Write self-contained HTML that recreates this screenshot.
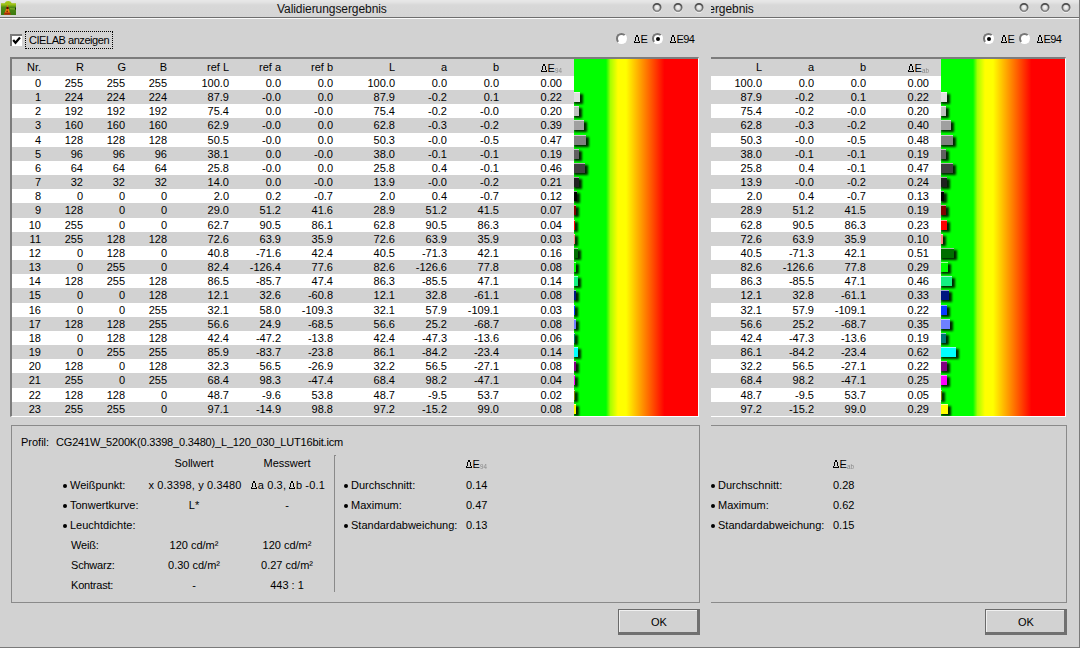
<!DOCTYPE html>
<html><head><meta charset="utf-8"><style>
*{margin:0;padding:0;box-sizing:border-box}
html,body{width:1080px;height:648px;overflow:hidden;background:#d2d2d2}
body{position:relative;font-family:"Liberation Sans",sans-serif;font-size:11px;color:#000}
.win{position:absolute;top:0;width:713px;height:648px;background:#d2d2d2;overflow:hidden}
#A{left:0}
#B{left:367px;clip-path:inset(0 0 0 344px)}
.tb{position:absolute;left:0;top:0;width:713px;height:17px;background:linear-gradient(#e8e8e8 0,#e4e4e4 2px,#d8d8d8 5px,#d5d5d5 17px)}
.tbl1{position:absolute;left:0;top:17px;width:713px;height:1px;background:#6e6e6e}
.tbl2{position:absolute;left:0;top:18px;width:713px;height:1px;background:#fafafa}
.title{position:absolute;left:277px;top:2px;letter-spacing:-0.07px;font-size:12px;line-height:14px;color:#111;white-space:nowrap}
.tbtn{position:absolute;top:3px;width:9px;height:9px;border-radius:50%;border:1.6px solid;border-color:#525252 #686868 #8c8c8c #686868;background:radial-gradient(circle at 50% 45%,#fbfbfb,#c4c4c4);box-shadow:0 1px 1px #fff}
.icon{position:absolute;left:1px;top:1px;width:15px;height:14px;background:linear-gradient(#a6c21a,#5f9320 45%,#3d7a18);border-radius:3px 3px 0 0}
.cone{position:absolute;left:3px;top:4px;width:0;height:0;border-left:3px solid transparent;border-right:3px solid transparent;border-bottom:10px solid #e36a10}
.t{position:absolute;white-space:nowrap;line-height:11px}
.t.r{text-align:right}
.t.c{transform:translateX(-50%)}
.sub{display:inline-block;font-size:8px;color:#888;vertical-align:-1px;transform:scaleX(0.78);transform-origin:0 50%}
.dl{vertical-align:baseline;margin-right:0.6px;shape-rendering:crispEdges}
.cb{position:absolute;left:10px;top:34px;width:12px;height:12px;background:#fff;border-top:2px solid #7a7a7a;border-left:2px solid #7a7a7a}
.cb svg{position:absolute;left:0px;top:0px}
.focus{position:absolute;left:25px;top:31px;width:88px;height:18px;border:1px dotted #000}
.radio{position:absolute;top:33px;width:11px;height:11px;border-radius:50%;background:#fff;border-top:2px solid #777;border-left:2px solid #777;border-right:2px solid #fff;border-bottom:2px solid #fff}
.radio i{position:absolute;left:2px;top:2px;width:4px;height:4px;border-radius:50%;background:#000}
.tframe{position:absolute;left:10px;top:57px;width:689px;height:360px;border-top:2px solid #7c7c7c;border-left:2px solid #7c7c7c;border-right:1px solid #fff;border-bottom:1px solid #fff}
.hdr{position:absolute;left:12px;top:59px;width:562px;height:17px;background:#d2d2d2}
.rw{position:absolute;left:12px;width:562px;background:#fff}
.rg{position:absolute;left:12px;width:562px;background:#d2d2d2}
.grad{position:absolute;left:574px;top:59px;width:124px;height:357px;overflow:hidden;background:linear-gradient(90deg,#00ff00 0,#00ff00 32px,#a8ff00 36.5px,#ffff00 44px,#ffff00 52px,#ff0000 90.5px,#ff0000 124px)}
.bar{position:absolute;left:0;height:10px;box-shadow:inset 0 1px 0 rgba(255,255,255,.6)}
.shd{position:absolute;left:0;height:10px;background:rgba(0,0,0,.85);filter:blur(1.1px)}
.panel{position:absolute;left:11px;top:425px;width:689px;height:178px;border:1px solid #8a8a8a}
.vsep{position:absolute;left:334px;top:455px;width:2px;height:137px;border-left:1px solid #8a8a8a;border-top:1px solid #8a8a8a}
.bul{position:absolute;width:4px;height:4px;background:#000;border-radius:50%}
.ok{position:absolute;left:618px;top:609px;width:82px;height:26px;border-top:1px solid #6a6a6a;border-left:1px solid #6a6a6a;border-right:3px solid #707070;border-bottom:3px solid #707070;box-shadow:inset 1px 1px 0 #f0f0f0}
.wbot{position:absolute;left:0;top:647px;width:713px;height:1px;background:#7a7a7a}
</style></head>
<body>
<div class="win" id="A">
<div class="tb"></div><div class="tbl1"></div><div class="tbl2"></div>
<svg style="position:absolute;left:0;top:0" width="17" height="16" viewBox="0 0 17 16"><defs><linearGradient id="ig" x1="0" y1="0" x2="0" y2="1"><stop offset="0" stop-color="#a8c814"/><stop offset="0.25" stop-color="#9cc018"/><stop offset="0.45" stop-color="#4e8a14"/><stop offset="1" stop-color="#3c7a10"/></linearGradient></defs><path d="M1 3.2 H4.6 Q5.6 1 8.2 1 Q10.8 1 11.8 3.2 H16 V15 H1 Z" fill="url(#ig)"/><path d="M7.6 4.2 L10.4 14.6 L4.2 14.6 Z" fill="#f27c12"/><rect x="4.2" y="12.6" width="6.2" height="2" fill="#a82a08"/><circle cx="7.5" cy="8" r="1.3" fill="#5a0c00"/><circle cx="7.2" cy="11.4" r="0.9" fill="#8a2a00"/><path d="M10 8.2 L15 8.6 L15 9.6 L10 9.2 Z" fill="#a0c838" opacity="0.7"/><rect x="15" y="7.6" width="1" height="2" fill="#1a2a10"/></svg>
<div class="title">Validierungsergebnis</div>
<svg style="position:absolute;left:640px;top:0" width="73" height="17" viewBox="640 0 73 17"><defs><radialGradient id="bgA" cx="0.5" cy="0.45" r="0.55"><stop offset="0" stop-color="#fbfbfb"/><stop offset="1" stop-color="#c2c2c2"/></radialGradient><linearGradient id="rgA" x1="0" y1="0" x2="0" y2="1"><stop offset="0" stop-color="#4a4a4a"/><stop offset="1" stop-color="#8a8a8a"/></linearGradient></defs>
<circle cx="657" cy="8.3" r="4.3" fill="none" stroke="#fff" stroke-opacity="0.8" stroke-width="1"/><circle cx="657" cy="7.6" r="3.7" fill="url(#bgA)" stroke="url(#rgA)" stroke-width="1.8"/>
<circle cx="678" cy="8.3" r="4.3" fill="none" stroke="#fff" stroke-opacity="0.8" stroke-width="1"/><circle cx="678" cy="7.6" r="3.7" fill="url(#bgA)" stroke="url(#rgA)" stroke-width="1.8"/>
<circle cx="699" cy="8.3" r="4.3" fill="none" stroke="#fff" stroke-opacity="0.8" stroke-width="1"/><circle cx="699" cy="7.6" r="3.7" fill="url(#bgA)" stroke="url(#rgA)" stroke-width="1.8"/>
</svg>
<div class="cb"><svg width="12" height="12" viewBox="0 0 12 12"><path d="M1.2 4 L3.5 6.8 L8 1.5" stroke="#000" stroke-width="2.2" fill="none"/></svg></div>
<div class="focus"></div><div class="t" style="left:29px;top:35px;letter-spacing:-0.45px">CIELAB anzeigen</div>
<div class="radio" style="left:616px"></div>
<div class="t" style="left:634px;top:34px;letter-spacing:-0.6px"><svg class="dl" width="6" height="8" viewBox="0 0 6 8"><path d="M2 0h2v2H2zM1 2h1v4H1zM4 2h1v4H4zM0 6h1v1H0zM5 6h1v1H5zM0 7h6v1H0z"/></svg>E</div>
<div class="radio" style="left:652px"><i></i></div>
<div class="t" style="left:670px;top:34px;letter-spacing:-0.6px"><svg class="dl" width="6" height="8" viewBox="0 0 6 8"><path d="M2 0h2v2H2zM1 2h1v4H1zM4 2h1v4H4zM0 6h1v1H0zM5 6h1v1H5zM0 7h6v1H0z"/></svg>E94</div>
<div class="tframe"></div>
<div class="hdr"></div>
<div class="t r" style="right:672px;top:62px">Nr.</div>
<div class="t r" style="right:629px;top:62px">R</div>
<div class="t r" style="right:587px;top:62px">G</div>
<div class="t r" style="right:546px;top:62px">B</div>
<div class="t r" style="right:484px;top:62px">ref L</div>
<div class="t r" style="right:432px;top:62px">ref a</div>
<div class="t r" style="right:380px;top:62px">ref b</div>
<div class="t r" style="right:318px;top:62px">L</div>
<div class="t r" style="right:266px;top:62px">a</div>
<div class="t r" style="right:214px;top:62px">b</div>
<div class="t" style="left:541px;top:63px"><svg class="dl" width="6" height="8" viewBox="0 0 6 8"><path d="M2 0h2v2H2zM1 2h1v4H1zM4 2h1v4H4zM0 6h1v1H0zM5 6h1v1H5zM0 7h6v1H0z"/></svg>E<span class="sub">94</span></div>
<div class="rw" style="top:76px;height:14px"></div>
<div class="t r" style="right:672px;top:78px">0</div>
<div class="t r" style="right:630px;top:78px">255</div>
<div class="t r" style="right:588px;top:78px">255</div>
<div class="t r" style="right:546px;top:78px">255</div>
<div class="t r" style="right:484px;top:78px">100.0</div>
<div class="t r" style="right:432px;top:78px">0.0</div>
<div class="t r" style="right:380px;top:78px">0.0</div>
<div class="t r" style="right:318px;top:78px">100.0</div>
<div class="t r" style="right:266px;top:78px">0.0</div>
<div class="t r" style="right:214px;top:78px">0.0</div>
<div class="t r" style="right:151px;top:78px">0.00</div>
<div class="rg" style="top:90px;height:14px"></div>
<div class="t r" style="right:672px;top:92px">1</div>
<div class="t r" style="right:630px;top:92px">224</div>
<div class="t r" style="right:588px;top:92px">224</div>
<div class="t r" style="right:546px;top:92px">224</div>
<div class="t r" style="right:484px;top:92px">87.9</div>
<div class="t r" style="right:432px;top:92px">-0.0</div>
<div class="t r" style="right:380px;top:92px">0.0</div>
<div class="t r" style="right:318px;top:92px">87.9</div>
<div class="t r" style="right:266px;top:92px">-0.2</div>
<div class="t r" style="right:214px;top:92px">0.1</div>
<div class="t r" style="right:151px;top:92px">0.22</div>
<div class="rw" style="top:104px;height:14px"></div>
<div class="t r" style="right:672px;top:106px">2</div>
<div class="t r" style="right:630px;top:106px">192</div>
<div class="t r" style="right:588px;top:106px">192</div>
<div class="t r" style="right:546px;top:106px">192</div>
<div class="t r" style="right:484px;top:106px">75.4</div>
<div class="t r" style="right:432px;top:106px">0.0</div>
<div class="t r" style="right:380px;top:106px">-0.0</div>
<div class="t r" style="right:318px;top:106px">75.4</div>
<div class="t r" style="right:266px;top:106px">-0.2</div>
<div class="t r" style="right:214px;top:106px">-0.0</div>
<div class="t r" style="right:151px;top:106px">0.20</div>
<div class="rg" style="top:118px;height:15px"></div>
<div class="t r" style="right:672px;top:120px">3</div>
<div class="t r" style="right:630px;top:120px">160</div>
<div class="t r" style="right:588px;top:120px">160</div>
<div class="t r" style="right:546px;top:120px">160</div>
<div class="t r" style="right:484px;top:120px">62.9</div>
<div class="t r" style="right:432px;top:120px">-0.0</div>
<div class="t r" style="right:380px;top:120px">0.0</div>
<div class="t r" style="right:318px;top:120px">62.8</div>
<div class="t r" style="right:266px;top:120px">-0.3</div>
<div class="t r" style="right:214px;top:120px">-0.2</div>
<div class="t r" style="right:151px;top:120px">0.39</div>
<div class="rw" style="top:133px;height:14px"></div>
<div class="t r" style="right:672px;top:135px">4</div>
<div class="t r" style="right:630px;top:135px">128</div>
<div class="t r" style="right:588px;top:135px">128</div>
<div class="t r" style="right:546px;top:135px">128</div>
<div class="t r" style="right:484px;top:135px">50.5</div>
<div class="t r" style="right:432px;top:135px">-0.0</div>
<div class="t r" style="right:380px;top:135px">0.0</div>
<div class="t r" style="right:318px;top:135px">50.3</div>
<div class="t r" style="right:266px;top:135px">-0.0</div>
<div class="t r" style="right:214px;top:135px">-0.5</div>
<div class="t r" style="right:151px;top:135px">0.47</div>
<div class="rg" style="top:147px;height:14px"></div>
<div class="t r" style="right:672px;top:149px">5</div>
<div class="t r" style="right:630px;top:149px">96</div>
<div class="t r" style="right:588px;top:149px">96</div>
<div class="t r" style="right:546px;top:149px">96</div>
<div class="t r" style="right:484px;top:149px">38.1</div>
<div class="t r" style="right:432px;top:149px">0.0</div>
<div class="t r" style="right:380px;top:149px">-0.0</div>
<div class="t r" style="right:318px;top:149px">38.0</div>
<div class="t r" style="right:266px;top:149px">-0.1</div>
<div class="t r" style="right:214px;top:149px">-0.1</div>
<div class="t r" style="right:151px;top:149px">0.19</div>
<div class="rw" style="top:161px;height:14px"></div>
<div class="t r" style="right:672px;top:163px">6</div>
<div class="t r" style="right:630px;top:163px">64</div>
<div class="t r" style="right:588px;top:163px">64</div>
<div class="t r" style="right:546px;top:163px">64</div>
<div class="t r" style="right:484px;top:163px">25.8</div>
<div class="t r" style="right:432px;top:163px">-0.0</div>
<div class="t r" style="right:380px;top:163px">0.0</div>
<div class="t r" style="right:318px;top:163px">25.8</div>
<div class="t r" style="right:266px;top:163px">0.4</div>
<div class="t r" style="right:214px;top:163px">-0.1</div>
<div class="t r" style="right:151px;top:163px">0.46</div>
<div class="rg" style="top:175px;height:14px"></div>
<div class="t r" style="right:672px;top:177px">7</div>
<div class="t r" style="right:630px;top:177px">32</div>
<div class="t r" style="right:588px;top:177px">32</div>
<div class="t r" style="right:546px;top:177px">32</div>
<div class="t r" style="right:484px;top:177px">14.0</div>
<div class="t r" style="right:432px;top:177px">0.0</div>
<div class="t r" style="right:380px;top:177px">-0.0</div>
<div class="t r" style="right:318px;top:177px">13.9</div>
<div class="t r" style="right:266px;top:177px">-0.0</div>
<div class="t r" style="right:214px;top:177px">-0.2</div>
<div class="t r" style="right:151px;top:177px">0.21</div>
<div class="rw" style="top:189px;height:14px"></div>
<div class="t r" style="right:672px;top:191px">8</div>
<div class="t r" style="right:630px;top:191px">0</div>
<div class="t r" style="right:588px;top:191px">0</div>
<div class="t r" style="right:546px;top:191px">0</div>
<div class="t r" style="right:484px;top:191px">2.0</div>
<div class="t r" style="right:432px;top:191px">0.2</div>
<div class="t r" style="right:380px;top:191px">-0.7</div>
<div class="t r" style="right:318px;top:191px">2.0</div>
<div class="t r" style="right:266px;top:191px">0.4</div>
<div class="t r" style="right:214px;top:191px">-0.7</div>
<div class="t r" style="right:151px;top:191px">0.12</div>
<div class="rg" style="top:203px;height:15px"></div>
<div class="t r" style="right:672px;top:205px">9</div>
<div class="t r" style="right:630px;top:205px">128</div>
<div class="t r" style="right:588px;top:205px">0</div>
<div class="t r" style="right:546px;top:205px">0</div>
<div class="t r" style="right:484px;top:205px">29.0</div>
<div class="t r" style="right:432px;top:205px">51.2</div>
<div class="t r" style="right:380px;top:205px">41.6</div>
<div class="t r" style="right:318px;top:205px">28.9</div>
<div class="t r" style="right:266px;top:205px">51.2</div>
<div class="t r" style="right:214px;top:205px">41.5</div>
<div class="t r" style="right:151px;top:205px">0.07</div>
<div class="rw" style="top:218px;height:14px"></div>
<div class="t r" style="right:672px;top:220px">10</div>
<div class="t r" style="right:630px;top:220px">255</div>
<div class="t r" style="right:588px;top:220px">0</div>
<div class="t r" style="right:546px;top:220px">0</div>
<div class="t r" style="right:484px;top:220px">62.7</div>
<div class="t r" style="right:432px;top:220px">90.5</div>
<div class="t r" style="right:380px;top:220px">86.1</div>
<div class="t r" style="right:318px;top:220px">62.8</div>
<div class="t r" style="right:266px;top:220px">90.5</div>
<div class="t r" style="right:214px;top:220px">86.3</div>
<div class="t r" style="right:151px;top:220px">0.04</div>
<div class="rg" style="top:232px;height:14px"></div>
<div class="t r" style="right:672px;top:234px">11</div>
<div class="t r" style="right:630px;top:234px">255</div>
<div class="t r" style="right:588px;top:234px">128</div>
<div class="t r" style="right:546px;top:234px">128</div>
<div class="t r" style="right:484px;top:234px">72.6</div>
<div class="t r" style="right:432px;top:234px">63.9</div>
<div class="t r" style="right:380px;top:234px">35.9</div>
<div class="t r" style="right:318px;top:234px">72.6</div>
<div class="t r" style="right:266px;top:234px">63.9</div>
<div class="t r" style="right:214px;top:234px">35.9</div>
<div class="t r" style="right:151px;top:234px">0.03</div>
<div class="rw" style="top:246px;height:14px"></div>
<div class="t r" style="right:672px;top:248px">12</div>
<div class="t r" style="right:630px;top:248px">0</div>
<div class="t r" style="right:588px;top:248px">128</div>
<div class="t r" style="right:546px;top:248px">0</div>
<div class="t r" style="right:484px;top:248px">40.8</div>
<div class="t r" style="right:432px;top:248px">-71.6</div>
<div class="t r" style="right:380px;top:248px">42.4</div>
<div class="t r" style="right:318px;top:248px">40.5</div>
<div class="t r" style="right:266px;top:248px">-71.3</div>
<div class="t r" style="right:214px;top:248px">42.1</div>
<div class="t r" style="right:151px;top:248px">0.16</div>
<div class="rg" style="top:260px;height:14px"></div>
<div class="t r" style="right:672px;top:262px">13</div>
<div class="t r" style="right:630px;top:262px">0</div>
<div class="t r" style="right:588px;top:262px">255</div>
<div class="t r" style="right:546px;top:262px">0</div>
<div class="t r" style="right:484px;top:262px">82.4</div>
<div class="t r" style="right:432px;top:262px">-126.4</div>
<div class="t r" style="right:380px;top:262px">77.6</div>
<div class="t r" style="right:318px;top:262px">82.6</div>
<div class="t r" style="right:266px;top:262px">-126.6</div>
<div class="t r" style="right:214px;top:262px">77.8</div>
<div class="t r" style="right:151px;top:262px">0.08</div>
<div class="rw" style="top:274px;height:14px"></div>
<div class="t r" style="right:672px;top:276px">14</div>
<div class="t r" style="right:630px;top:276px">128</div>
<div class="t r" style="right:588px;top:276px">255</div>
<div class="t r" style="right:546px;top:276px">128</div>
<div class="t r" style="right:484px;top:276px">86.5</div>
<div class="t r" style="right:432px;top:276px">-85.7</div>
<div class="t r" style="right:380px;top:276px">47.4</div>
<div class="t r" style="right:318px;top:276px">86.3</div>
<div class="t r" style="right:266px;top:276px">-85.5</div>
<div class="t r" style="right:214px;top:276px">47.1</div>
<div class="t r" style="right:151px;top:276px">0.14</div>
<div class="rg" style="top:288px;height:15px"></div>
<div class="t r" style="right:672px;top:290px">15</div>
<div class="t r" style="right:630px;top:290px">0</div>
<div class="t r" style="right:588px;top:290px">0</div>
<div class="t r" style="right:546px;top:290px">128</div>
<div class="t r" style="right:484px;top:290px">12.1</div>
<div class="t r" style="right:432px;top:290px">32.6</div>
<div class="t r" style="right:380px;top:290px">-60.8</div>
<div class="t r" style="right:318px;top:290px">12.1</div>
<div class="t r" style="right:266px;top:290px">32.8</div>
<div class="t r" style="right:214px;top:290px">-61.1</div>
<div class="t r" style="right:151px;top:290px">0.08</div>
<div class="rw" style="top:303px;height:14px"></div>
<div class="t r" style="right:672px;top:305px">16</div>
<div class="t r" style="right:630px;top:305px">0</div>
<div class="t r" style="right:588px;top:305px">0</div>
<div class="t r" style="right:546px;top:305px">255</div>
<div class="t r" style="right:484px;top:305px">32.1</div>
<div class="t r" style="right:432px;top:305px">58.0</div>
<div class="t r" style="right:380px;top:305px">-109.3</div>
<div class="t r" style="right:318px;top:305px">32.1</div>
<div class="t r" style="right:266px;top:305px">57.9</div>
<div class="t r" style="right:214px;top:305px">-109.1</div>
<div class="t r" style="right:151px;top:305px">0.03</div>
<div class="rg" style="top:317px;height:14px"></div>
<div class="t r" style="right:672px;top:319px">17</div>
<div class="t r" style="right:630px;top:319px">128</div>
<div class="t r" style="right:588px;top:319px">128</div>
<div class="t r" style="right:546px;top:319px">255</div>
<div class="t r" style="right:484px;top:319px">56.6</div>
<div class="t r" style="right:432px;top:319px">24.9</div>
<div class="t r" style="right:380px;top:319px">-68.5</div>
<div class="t r" style="right:318px;top:319px">56.6</div>
<div class="t r" style="right:266px;top:319px">25.2</div>
<div class="t r" style="right:214px;top:319px">-68.7</div>
<div class="t r" style="right:151px;top:319px">0.08</div>
<div class="rw" style="top:331px;height:14px"></div>
<div class="t r" style="right:672px;top:333px">18</div>
<div class="t r" style="right:630px;top:333px">0</div>
<div class="t r" style="right:588px;top:333px">128</div>
<div class="t r" style="right:546px;top:333px">128</div>
<div class="t r" style="right:484px;top:333px">42.4</div>
<div class="t r" style="right:432px;top:333px">-47.2</div>
<div class="t r" style="right:380px;top:333px">-13.8</div>
<div class="t r" style="right:318px;top:333px">42.4</div>
<div class="t r" style="right:266px;top:333px">-47.3</div>
<div class="t r" style="right:214px;top:333px">-13.6</div>
<div class="t r" style="right:151px;top:333px">0.06</div>
<div class="rg" style="top:345px;height:14px"></div>
<div class="t r" style="right:672px;top:347px">19</div>
<div class="t r" style="right:630px;top:347px">0</div>
<div class="t r" style="right:588px;top:347px">255</div>
<div class="t r" style="right:546px;top:347px">255</div>
<div class="t r" style="right:484px;top:347px">85.9</div>
<div class="t r" style="right:432px;top:347px">-83.7</div>
<div class="t r" style="right:380px;top:347px">-23.8</div>
<div class="t r" style="right:318px;top:347px">86.1</div>
<div class="t r" style="right:266px;top:347px">-84.2</div>
<div class="t r" style="right:214px;top:347px">-23.4</div>
<div class="t r" style="right:151px;top:347px">0.14</div>
<div class="rw" style="top:359px;height:14px"></div>
<div class="t r" style="right:672px;top:361px">20</div>
<div class="t r" style="right:630px;top:361px">128</div>
<div class="t r" style="right:588px;top:361px">0</div>
<div class="t r" style="right:546px;top:361px">128</div>
<div class="t r" style="right:484px;top:361px">32.3</div>
<div class="t r" style="right:432px;top:361px">56.5</div>
<div class="t r" style="right:380px;top:361px">-26.9</div>
<div class="t r" style="right:318px;top:361px">32.2</div>
<div class="t r" style="right:266px;top:361px">56.5</div>
<div class="t r" style="right:214px;top:361px">-27.1</div>
<div class="t r" style="right:151px;top:361px">0.08</div>
<div class="rg" style="top:373px;height:15px"></div>
<div class="t r" style="right:672px;top:375px">21</div>
<div class="t r" style="right:630px;top:375px">255</div>
<div class="t r" style="right:588px;top:375px">0</div>
<div class="t r" style="right:546px;top:375px">255</div>
<div class="t r" style="right:484px;top:375px">68.4</div>
<div class="t r" style="right:432px;top:375px">98.3</div>
<div class="t r" style="right:380px;top:375px">-47.4</div>
<div class="t r" style="right:318px;top:375px">68.4</div>
<div class="t r" style="right:266px;top:375px">98.2</div>
<div class="t r" style="right:214px;top:375px">-47.1</div>
<div class="t r" style="right:151px;top:375px">0.04</div>
<div class="rw" style="top:388px;height:14px"></div>
<div class="t r" style="right:672px;top:390px">22</div>
<div class="t r" style="right:630px;top:390px">128</div>
<div class="t r" style="right:588px;top:390px">128</div>
<div class="t r" style="right:546px;top:390px">0</div>
<div class="t r" style="right:484px;top:390px">48.7</div>
<div class="t r" style="right:432px;top:390px">-9.6</div>
<div class="t r" style="right:380px;top:390px">53.8</div>
<div class="t r" style="right:318px;top:390px">48.7</div>
<div class="t r" style="right:266px;top:390px">-9.5</div>
<div class="t r" style="right:214px;top:390px">53.7</div>
<div class="t r" style="right:151px;top:390px">0.02</div>
<div class="rg" style="top:402px;height:14px"></div>
<div class="t r" style="right:672px;top:404px">23</div>
<div class="t r" style="right:630px;top:404px">255</div>
<div class="t r" style="right:588px;top:404px">255</div>
<div class="t r" style="right:546px;top:404px">0</div>
<div class="t r" style="right:484px;top:404px">97.1</div>
<div class="t r" style="right:432px;top:404px">-14.9</div>
<div class="t r" style="right:380px;top:404px">98.8</div>
<div class="t r" style="right:318px;top:404px">97.2</div>
<div class="t r" style="right:266px;top:404px">-15.2</div>
<div class="t r" style="right:214px;top:404px">99.0</div>
<div class="t r" style="right:151px;top:404px">0.08</div>
<div class="grad">
<div class="shd" style="top:35px;width:9px"></div>
<div class="bar" style="top:33px;width:6px;background:rgb(224, 224, 224)"></div>
<div class="shd" style="top:49px;width:8px"></div>
<div class="bar" style="top:47px;width:5px;background:rgb(192, 192, 192)"></div>
<div class="shd" style="top:63px;width:13px"></div>
<div class="bar" style="top:61px;width:10px;background:rgb(160, 160, 160)"></div>
<div class="shd" style="top:78px;width:15px"></div>
<div class="bar" style="top:76px;width:12px;background:rgb(128, 128, 128)"></div>
<div class="shd" style="top:92px;width:8px"></div>
<div class="bar" style="top:90px;width:5px;background:rgb(96, 96, 96)"></div>
<div class="shd" style="top:106px;width:14px"></div>
<div class="bar" style="top:104px;width:11px;background:rgb(64, 64, 64)"></div>
<div class="shd" style="top:120px;width:8px"></div>
<div class="bar" style="top:118px;width:5px;background:rgb(32, 32, 32)"></div>
<div class="shd" style="top:134px;width:6px"></div>
<div class="bar" style="top:132px;width:3px;background:rgb(0, 0, 0)"></div>
<div class="shd" style="top:148px;width:5px"></div>
<div class="bar" style="top:146px;width:2px;background:rgb(128, 0, 0)"></div>
<div class="shd" style="top:163px;width:4px"></div>
<div class="bar" style="top:161px;width:1px;background:rgb(255, 0, 0)"></div>
<div class="shd" style="top:177px;width:4px"></div>
<div class="bar" style="top:175px;width:1px;background:rgb(255, 128, 128)"></div>
<div class="shd" style="top:191px;width:7px"></div>
<div class="bar" style="top:189px;width:4px;background:rgb(0, 110, 0)"></div>
<div class="shd" style="top:205px;width:5px"></div>
<div class="bar" style="top:203px;width:2px;background:rgb(0, 255, 0)"></div>
<div class="shd" style="top:219px;width:7px"></div>
<div class="bar" style="top:217px;width:4px;background:rgb(20, 240, 130)"></div>
<div class="shd" style="top:233px;width:5px"></div>
<div class="bar" style="top:231px;width:2px;background:rgb(0, 24, 128)"></div>
<div class="shd" style="top:248px;width:4px"></div>
<div class="bar" style="top:246px;width:1px;background:rgb(10, 60, 255)"></div>
<div class="shd" style="top:262px;width:5px"></div>
<div class="bar" style="top:260px;width:2px;background:rgb(110, 128, 255)"></div>
<div class="shd" style="top:276px;width:4px"></div>
<div class="bar" style="top:274px;width:1px;background:rgb(0, 118, 118)"></div>
<div class="shd" style="top:290px;width:7px"></div>
<div class="bar" style="top:288px;width:4px;background:rgb(0, 255, 255)"></div>
<div class="shd" style="top:304px;width:5px"></div>
<div class="bar" style="top:302px;width:2px;background:rgb(128, 0, 128)"></div>
<div class="shd" style="top:318px;width:4px"></div>
<div class="bar" style="top:316px;width:1px;background:rgb(255, 0, 255)"></div>
<div class="shd" style="top:333px;width:4px"></div>
<div class="bar" style="top:331px;width:1px;background:rgb(128, 128, 0)"></div>
<div class="shd" style="top:347px;width:5px"></div>
<div class="bar" style="top:345px;width:2px;background:rgb(255, 255, 0)"></div>
</div>
<div class="panel"></div>
<div class="t" style="left:21px;top:437px">Profil:</div>
<div class="t" style="left:56px;top:437px;letter-spacing:-0.18px">CG241W_5200K(0.3398_0.3480)_L_120_030_LUT16bit.icm</div>
<div class="t c" style="left:194px;top:458px">Sollwert</div>
<div class="t c" style="left:287px;top:458px">Messwert</div>
<div class="bul" style="left:63px;top:484px"></div>
<div class="t" style="left:70px;top:480px">Wei&szlig;punkt:</div>
<div class="bul" style="left:63px;top:504px"></div>
<div class="t" style="left:70px;top:500px">Tonwertkurve:</div>
<div class="bul" style="left:63px;top:524px"></div>
<div class="t" style="left:70px;top:520px">Leuchtdichte:</div>
<div class="t c" style="left:195px;top:480px;letter-spacing:0.15px">x 0.3398, y 0.3480</div>
<div class="t c" style="left:288px;top:480px;letter-spacing:0.15px"><svg class="dl" width="6" height="8" viewBox="0 0 6 8"><path d="M2 0h2v2H2zM1 2h1v4H1zM4 2h1v4H4zM0 6h1v1H0zM5 6h1v1H5zM0 7h6v1H0z"/></svg>a 0.3, <svg class="dl" width="6" height="8" viewBox="0 0 6 8"><path d="M2 0h2v2H2zM1 2h1v4H1zM4 2h1v4H4zM0 6h1v1H0zM5 6h1v1H5zM0 7h6v1H0z"/></svg>b -0.1</div>
<div class="t c" style="left:194px;top:500px">L*</div>
<div class="t c" style="left:287px;top:500px">-</div>
<div class="t" style="left:71px;top:540px;letter-spacing:-0.2px">Wei&szlig;:</div>
<div class="t c" style="left:194px;top:540px">120 cd/m&sup2;</div>
<div class="t c" style="left:287px;top:540px">120 cd/m&sup2;</div>
<div class="t" style="left:71px;top:560px;letter-spacing:-0.2px">Schwarz:</div>
<div class="t c" style="left:194px;top:560px">0.30 cd/m&sup2;</div>
<div class="t c" style="left:287px;top:560px">0.27 cd/m&sup2;</div>
<div class="t" style="left:71px;top:580px;letter-spacing:-0.2px">Kontrast:</div>
<div class="t c" style="left:194px;top:580px">-</div>
<div class="t c" style="left:287px;top:580px">443 : 1</div>
<div class="vsep"></div>
<div class="t" style="left:466px;top:459px"><svg class="dl" width="6" height="8" viewBox="0 0 6 8"><path d="M2 0h2v2H2zM1 2h1v4H1zM4 2h1v4H4zM0 6h1v1H0zM5 6h1v1H5zM0 7h6v1H0z"/></svg>E<span class="sub">94</span></div>
<div class="bul" style="left:344px;top:484px"></div>
<div class="t" style="left:351px;top:480px">Durchschnitt:</div>
<div class="t" style="left:466px;top:480px">0.14</div>
<div class="bul" style="left:344px;top:504px"></div>
<div class="t" style="left:351px;top:500px">Maximum:</div>
<div class="t" style="left:466px;top:500px">0.47</div>
<div class="bul" style="left:344px;top:524px"></div>
<div class="t" style="left:351px;top:520px">Standardabweichung:</div>
<div class="t" style="left:466px;top:520px">0.13</div>
<div class="ok"><div class="t c" style="left:40px;top:7px">OK</div></div>
<div class="wbot"></div>
</div>
<div class="win" id="B">
<div class="tb"></div><div class="tbl1"></div><div class="tbl2"></div>
<div class="title">Validierungsergebnis</div>
<svg style="position:absolute;left:640px;top:0" width="73" height="17" viewBox="640 0 73 17"><defs><radialGradient id="bgB" cx="0.5" cy="0.45" r="0.55"><stop offset="0" stop-color="#fbfbfb"/><stop offset="1" stop-color="#c2c2c2"/></radialGradient><linearGradient id="rgB" x1="0" y1="0" x2="0" y2="1"><stop offset="0" stop-color="#4a4a4a"/><stop offset="1" stop-color="#8a8a8a"/></linearGradient></defs>
<circle cx="657" cy="8.3" r="4.3" fill="none" stroke="#fff" stroke-opacity="0.8" stroke-width="1"/><circle cx="657" cy="7.6" r="3.7" fill="url(#bgB)" stroke="url(#rgB)" stroke-width="1.8"/>
<circle cx="678" cy="8.3" r="4.3" fill="none" stroke="#fff" stroke-opacity="0.8" stroke-width="1"/><circle cx="678" cy="7.6" r="3.7" fill="url(#bgB)" stroke="url(#rgB)" stroke-width="1.8"/>
<circle cx="699" cy="8.3" r="4.3" fill="none" stroke="#fff" stroke-opacity="0.8" stroke-width="1"/><circle cx="699" cy="7.6" r="3.7" fill="url(#bgB)" stroke="url(#rgB)" stroke-width="1.8"/>
</svg>
<div class="cb"><svg width="12" height="12" viewBox="0 0 12 12"><path d="M1.2 4 L3.5 6.8 L8 1.5" stroke="#000" stroke-width="2.2" fill="none"/></svg></div>
<div class="focus"></div><div class="t" style="left:29px;top:35px;letter-spacing:-0.45px">CIELAB anzeigen</div>
<div class="radio" style="left:616px"><i></i></div>
<div class="t" style="left:634px;top:34px;letter-spacing:-0.6px"><svg class="dl" width="6" height="8" viewBox="0 0 6 8"><path d="M2 0h2v2H2zM1 2h1v4H1zM4 2h1v4H4zM0 6h1v1H0zM5 6h1v1H5zM0 7h6v1H0z"/></svg>E</div>
<div class="radio" style="left:652px"></div>
<div class="t" style="left:670px;top:34px;letter-spacing:-0.6px"><svg class="dl" width="6" height="8" viewBox="0 0 6 8"><path d="M2 0h2v2H2zM1 2h1v4H1zM4 2h1v4H4zM0 6h1v1H0zM5 6h1v1H5zM0 7h6v1H0z"/></svg>E94</div>
<div class="tframe"></div>
<div class="hdr"></div>
<div class="t r" style="right:672px;top:62px">Nr.</div>
<div class="t r" style="right:629px;top:62px">R</div>
<div class="t r" style="right:587px;top:62px">G</div>
<div class="t r" style="right:546px;top:62px">B</div>
<div class="t r" style="right:484px;top:62px">ref L</div>
<div class="t r" style="right:432px;top:62px">ref a</div>
<div class="t r" style="right:380px;top:62px">ref b</div>
<div class="t r" style="right:318px;top:62px">L</div>
<div class="t r" style="right:266px;top:62px">a</div>
<div class="t r" style="right:214px;top:62px">b</div>
<div class="t" style="left:541px;top:63px"><svg class="dl" width="6" height="8" viewBox="0 0 6 8"><path d="M2 0h2v2H2zM1 2h1v4H1zM4 2h1v4H4zM0 6h1v1H0zM5 6h1v1H5zM0 7h6v1H0z"/></svg>E<span class="sub">ab</span></div>
<div class="rw" style="top:76px;height:14px"></div>
<div class="t r" style="right:672px;top:78px">0</div>
<div class="t r" style="right:630px;top:78px">255</div>
<div class="t r" style="right:588px;top:78px">255</div>
<div class="t r" style="right:546px;top:78px">255</div>
<div class="t r" style="right:484px;top:78px">100.0</div>
<div class="t r" style="right:432px;top:78px">0.0</div>
<div class="t r" style="right:380px;top:78px">0.0</div>
<div class="t r" style="right:318px;top:78px">100.0</div>
<div class="t r" style="right:266px;top:78px">0.0</div>
<div class="t r" style="right:214px;top:78px">0.0</div>
<div class="t r" style="right:151px;top:78px">0.00</div>
<div class="rg" style="top:90px;height:14px"></div>
<div class="t r" style="right:672px;top:92px">1</div>
<div class="t r" style="right:630px;top:92px">224</div>
<div class="t r" style="right:588px;top:92px">224</div>
<div class="t r" style="right:546px;top:92px">224</div>
<div class="t r" style="right:484px;top:92px">87.9</div>
<div class="t r" style="right:432px;top:92px">-0.0</div>
<div class="t r" style="right:380px;top:92px">0.0</div>
<div class="t r" style="right:318px;top:92px">87.9</div>
<div class="t r" style="right:266px;top:92px">-0.2</div>
<div class="t r" style="right:214px;top:92px">0.1</div>
<div class="t r" style="right:151px;top:92px">0.22</div>
<div class="rw" style="top:104px;height:14px"></div>
<div class="t r" style="right:672px;top:106px">2</div>
<div class="t r" style="right:630px;top:106px">192</div>
<div class="t r" style="right:588px;top:106px">192</div>
<div class="t r" style="right:546px;top:106px">192</div>
<div class="t r" style="right:484px;top:106px">75.4</div>
<div class="t r" style="right:432px;top:106px">0.0</div>
<div class="t r" style="right:380px;top:106px">-0.0</div>
<div class="t r" style="right:318px;top:106px">75.4</div>
<div class="t r" style="right:266px;top:106px">-0.2</div>
<div class="t r" style="right:214px;top:106px">-0.0</div>
<div class="t r" style="right:151px;top:106px">0.20</div>
<div class="rg" style="top:118px;height:15px"></div>
<div class="t r" style="right:672px;top:120px">3</div>
<div class="t r" style="right:630px;top:120px">160</div>
<div class="t r" style="right:588px;top:120px">160</div>
<div class="t r" style="right:546px;top:120px">160</div>
<div class="t r" style="right:484px;top:120px">62.9</div>
<div class="t r" style="right:432px;top:120px">-0.0</div>
<div class="t r" style="right:380px;top:120px">0.0</div>
<div class="t r" style="right:318px;top:120px">62.8</div>
<div class="t r" style="right:266px;top:120px">-0.3</div>
<div class="t r" style="right:214px;top:120px">-0.2</div>
<div class="t r" style="right:151px;top:120px">0.40</div>
<div class="rw" style="top:133px;height:14px"></div>
<div class="t r" style="right:672px;top:135px">4</div>
<div class="t r" style="right:630px;top:135px">128</div>
<div class="t r" style="right:588px;top:135px">128</div>
<div class="t r" style="right:546px;top:135px">128</div>
<div class="t r" style="right:484px;top:135px">50.5</div>
<div class="t r" style="right:432px;top:135px">-0.0</div>
<div class="t r" style="right:380px;top:135px">0.0</div>
<div class="t r" style="right:318px;top:135px">50.3</div>
<div class="t r" style="right:266px;top:135px">-0.0</div>
<div class="t r" style="right:214px;top:135px">-0.5</div>
<div class="t r" style="right:151px;top:135px">0.48</div>
<div class="rg" style="top:147px;height:14px"></div>
<div class="t r" style="right:672px;top:149px">5</div>
<div class="t r" style="right:630px;top:149px">96</div>
<div class="t r" style="right:588px;top:149px">96</div>
<div class="t r" style="right:546px;top:149px">96</div>
<div class="t r" style="right:484px;top:149px">38.1</div>
<div class="t r" style="right:432px;top:149px">0.0</div>
<div class="t r" style="right:380px;top:149px">-0.0</div>
<div class="t r" style="right:318px;top:149px">38.0</div>
<div class="t r" style="right:266px;top:149px">-0.1</div>
<div class="t r" style="right:214px;top:149px">-0.1</div>
<div class="t r" style="right:151px;top:149px">0.19</div>
<div class="rw" style="top:161px;height:14px"></div>
<div class="t r" style="right:672px;top:163px">6</div>
<div class="t r" style="right:630px;top:163px">64</div>
<div class="t r" style="right:588px;top:163px">64</div>
<div class="t r" style="right:546px;top:163px">64</div>
<div class="t r" style="right:484px;top:163px">25.8</div>
<div class="t r" style="right:432px;top:163px">-0.0</div>
<div class="t r" style="right:380px;top:163px">0.0</div>
<div class="t r" style="right:318px;top:163px">25.8</div>
<div class="t r" style="right:266px;top:163px">0.4</div>
<div class="t r" style="right:214px;top:163px">-0.1</div>
<div class="t r" style="right:151px;top:163px">0.47</div>
<div class="rg" style="top:175px;height:14px"></div>
<div class="t r" style="right:672px;top:177px">7</div>
<div class="t r" style="right:630px;top:177px">32</div>
<div class="t r" style="right:588px;top:177px">32</div>
<div class="t r" style="right:546px;top:177px">32</div>
<div class="t r" style="right:484px;top:177px">14.0</div>
<div class="t r" style="right:432px;top:177px">0.0</div>
<div class="t r" style="right:380px;top:177px">-0.0</div>
<div class="t r" style="right:318px;top:177px">13.9</div>
<div class="t r" style="right:266px;top:177px">-0.0</div>
<div class="t r" style="right:214px;top:177px">-0.2</div>
<div class="t r" style="right:151px;top:177px">0.24</div>
<div class="rw" style="top:189px;height:14px"></div>
<div class="t r" style="right:672px;top:191px">8</div>
<div class="t r" style="right:630px;top:191px">0</div>
<div class="t r" style="right:588px;top:191px">0</div>
<div class="t r" style="right:546px;top:191px">0</div>
<div class="t r" style="right:484px;top:191px">2.0</div>
<div class="t r" style="right:432px;top:191px">0.2</div>
<div class="t r" style="right:380px;top:191px">-0.7</div>
<div class="t r" style="right:318px;top:191px">2.0</div>
<div class="t r" style="right:266px;top:191px">0.4</div>
<div class="t r" style="right:214px;top:191px">-0.7</div>
<div class="t r" style="right:151px;top:191px">0.13</div>
<div class="rg" style="top:203px;height:15px"></div>
<div class="t r" style="right:672px;top:205px">9</div>
<div class="t r" style="right:630px;top:205px">128</div>
<div class="t r" style="right:588px;top:205px">0</div>
<div class="t r" style="right:546px;top:205px">0</div>
<div class="t r" style="right:484px;top:205px">29.0</div>
<div class="t r" style="right:432px;top:205px">51.2</div>
<div class="t r" style="right:380px;top:205px">41.6</div>
<div class="t r" style="right:318px;top:205px">28.9</div>
<div class="t r" style="right:266px;top:205px">51.2</div>
<div class="t r" style="right:214px;top:205px">41.5</div>
<div class="t r" style="right:151px;top:205px">0.19</div>
<div class="rw" style="top:218px;height:14px"></div>
<div class="t r" style="right:672px;top:220px">10</div>
<div class="t r" style="right:630px;top:220px">255</div>
<div class="t r" style="right:588px;top:220px">0</div>
<div class="t r" style="right:546px;top:220px">0</div>
<div class="t r" style="right:484px;top:220px">62.7</div>
<div class="t r" style="right:432px;top:220px">90.5</div>
<div class="t r" style="right:380px;top:220px">86.1</div>
<div class="t r" style="right:318px;top:220px">62.8</div>
<div class="t r" style="right:266px;top:220px">90.5</div>
<div class="t r" style="right:214px;top:220px">86.3</div>
<div class="t r" style="right:151px;top:220px">0.23</div>
<div class="rg" style="top:232px;height:14px"></div>
<div class="t r" style="right:672px;top:234px">11</div>
<div class="t r" style="right:630px;top:234px">255</div>
<div class="t r" style="right:588px;top:234px">128</div>
<div class="t r" style="right:546px;top:234px">128</div>
<div class="t r" style="right:484px;top:234px">72.6</div>
<div class="t r" style="right:432px;top:234px">63.9</div>
<div class="t r" style="right:380px;top:234px">35.9</div>
<div class="t r" style="right:318px;top:234px">72.6</div>
<div class="t r" style="right:266px;top:234px">63.9</div>
<div class="t r" style="right:214px;top:234px">35.9</div>
<div class="t r" style="right:151px;top:234px">0.10</div>
<div class="rw" style="top:246px;height:14px"></div>
<div class="t r" style="right:672px;top:248px">12</div>
<div class="t r" style="right:630px;top:248px">0</div>
<div class="t r" style="right:588px;top:248px">128</div>
<div class="t r" style="right:546px;top:248px">0</div>
<div class="t r" style="right:484px;top:248px">40.8</div>
<div class="t r" style="right:432px;top:248px">-71.6</div>
<div class="t r" style="right:380px;top:248px">42.4</div>
<div class="t r" style="right:318px;top:248px">40.5</div>
<div class="t r" style="right:266px;top:248px">-71.3</div>
<div class="t r" style="right:214px;top:248px">42.1</div>
<div class="t r" style="right:151px;top:248px">0.51</div>
<div class="rg" style="top:260px;height:14px"></div>
<div class="t r" style="right:672px;top:262px">13</div>
<div class="t r" style="right:630px;top:262px">0</div>
<div class="t r" style="right:588px;top:262px">255</div>
<div class="t r" style="right:546px;top:262px">0</div>
<div class="t r" style="right:484px;top:262px">82.4</div>
<div class="t r" style="right:432px;top:262px">-126.4</div>
<div class="t r" style="right:380px;top:262px">77.6</div>
<div class="t r" style="right:318px;top:262px">82.6</div>
<div class="t r" style="right:266px;top:262px">-126.6</div>
<div class="t r" style="right:214px;top:262px">77.8</div>
<div class="t r" style="right:151px;top:262px">0.29</div>
<div class="rw" style="top:274px;height:14px"></div>
<div class="t r" style="right:672px;top:276px">14</div>
<div class="t r" style="right:630px;top:276px">128</div>
<div class="t r" style="right:588px;top:276px">255</div>
<div class="t r" style="right:546px;top:276px">128</div>
<div class="t r" style="right:484px;top:276px">86.5</div>
<div class="t r" style="right:432px;top:276px">-85.7</div>
<div class="t r" style="right:380px;top:276px">47.4</div>
<div class="t r" style="right:318px;top:276px">86.3</div>
<div class="t r" style="right:266px;top:276px">-85.5</div>
<div class="t r" style="right:214px;top:276px">47.1</div>
<div class="t r" style="right:151px;top:276px">0.46</div>
<div class="rg" style="top:288px;height:15px"></div>
<div class="t r" style="right:672px;top:290px">15</div>
<div class="t r" style="right:630px;top:290px">0</div>
<div class="t r" style="right:588px;top:290px">0</div>
<div class="t r" style="right:546px;top:290px">128</div>
<div class="t r" style="right:484px;top:290px">12.1</div>
<div class="t r" style="right:432px;top:290px">32.6</div>
<div class="t r" style="right:380px;top:290px">-60.8</div>
<div class="t r" style="right:318px;top:290px">12.1</div>
<div class="t r" style="right:266px;top:290px">32.8</div>
<div class="t r" style="right:214px;top:290px">-61.1</div>
<div class="t r" style="right:151px;top:290px">0.33</div>
<div class="rw" style="top:303px;height:14px"></div>
<div class="t r" style="right:672px;top:305px">16</div>
<div class="t r" style="right:630px;top:305px">0</div>
<div class="t r" style="right:588px;top:305px">0</div>
<div class="t r" style="right:546px;top:305px">255</div>
<div class="t r" style="right:484px;top:305px">32.1</div>
<div class="t r" style="right:432px;top:305px">58.0</div>
<div class="t r" style="right:380px;top:305px">-109.3</div>
<div class="t r" style="right:318px;top:305px">32.1</div>
<div class="t r" style="right:266px;top:305px">57.9</div>
<div class="t r" style="right:214px;top:305px">-109.1</div>
<div class="t r" style="right:151px;top:305px">0.22</div>
<div class="rg" style="top:317px;height:14px"></div>
<div class="t r" style="right:672px;top:319px">17</div>
<div class="t r" style="right:630px;top:319px">128</div>
<div class="t r" style="right:588px;top:319px">128</div>
<div class="t r" style="right:546px;top:319px">255</div>
<div class="t r" style="right:484px;top:319px">56.6</div>
<div class="t r" style="right:432px;top:319px">24.9</div>
<div class="t r" style="right:380px;top:319px">-68.5</div>
<div class="t r" style="right:318px;top:319px">56.6</div>
<div class="t r" style="right:266px;top:319px">25.2</div>
<div class="t r" style="right:214px;top:319px">-68.7</div>
<div class="t r" style="right:151px;top:319px">0.35</div>
<div class="rw" style="top:331px;height:14px"></div>
<div class="t r" style="right:672px;top:333px">18</div>
<div class="t r" style="right:630px;top:333px">0</div>
<div class="t r" style="right:588px;top:333px">128</div>
<div class="t r" style="right:546px;top:333px">128</div>
<div class="t r" style="right:484px;top:333px">42.4</div>
<div class="t r" style="right:432px;top:333px">-47.2</div>
<div class="t r" style="right:380px;top:333px">-13.8</div>
<div class="t r" style="right:318px;top:333px">42.4</div>
<div class="t r" style="right:266px;top:333px">-47.3</div>
<div class="t r" style="right:214px;top:333px">-13.6</div>
<div class="t r" style="right:151px;top:333px">0.19</div>
<div class="rg" style="top:345px;height:14px"></div>
<div class="t r" style="right:672px;top:347px">19</div>
<div class="t r" style="right:630px;top:347px">0</div>
<div class="t r" style="right:588px;top:347px">255</div>
<div class="t r" style="right:546px;top:347px">255</div>
<div class="t r" style="right:484px;top:347px">85.9</div>
<div class="t r" style="right:432px;top:347px">-83.7</div>
<div class="t r" style="right:380px;top:347px">-23.8</div>
<div class="t r" style="right:318px;top:347px">86.1</div>
<div class="t r" style="right:266px;top:347px">-84.2</div>
<div class="t r" style="right:214px;top:347px">-23.4</div>
<div class="t r" style="right:151px;top:347px">0.62</div>
<div class="rw" style="top:359px;height:14px"></div>
<div class="t r" style="right:672px;top:361px">20</div>
<div class="t r" style="right:630px;top:361px">128</div>
<div class="t r" style="right:588px;top:361px">0</div>
<div class="t r" style="right:546px;top:361px">128</div>
<div class="t r" style="right:484px;top:361px">32.3</div>
<div class="t r" style="right:432px;top:361px">56.5</div>
<div class="t r" style="right:380px;top:361px">-26.9</div>
<div class="t r" style="right:318px;top:361px">32.2</div>
<div class="t r" style="right:266px;top:361px">56.5</div>
<div class="t r" style="right:214px;top:361px">-27.1</div>
<div class="t r" style="right:151px;top:361px">0.22</div>
<div class="rg" style="top:373px;height:15px"></div>
<div class="t r" style="right:672px;top:375px">21</div>
<div class="t r" style="right:630px;top:375px">255</div>
<div class="t r" style="right:588px;top:375px">0</div>
<div class="t r" style="right:546px;top:375px">255</div>
<div class="t r" style="right:484px;top:375px">68.4</div>
<div class="t r" style="right:432px;top:375px">98.3</div>
<div class="t r" style="right:380px;top:375px">-47.4</div>
<div class="t r" style="right:318px;top:375px">68.4</div>
<div class="t r" style="right:266px;top:375px">98.2</div>
<div class="t r" style="right:214px;top:375px">-47.1</div>
<div class="t r" style="right:151px;top:375px">0.25</div>
<div class="rw" style="top:388px;height:14px"></div>
<div class="t r" style="right:672px;top:390px">22</div>
<div class="t r" style="right:630px;top:390px">128</div>
<div class="t r" style="right:588px;top:390px">128</div>
<div class="t r" style="right:546px;top:390px">0</div>
<div class="t r" style="right:484px;top:390px">48.7</div>
<div class="t r" style="right:432px;top:390px">-9.6</div>
<div class="t r" style="right:380px;top:390px">53.8</div>
<div class="t r" style="right:318px;top:390px">48.7</div>
<div class="t r" style="right:266px;top:390px">-9.5</div>
<div class="t r" style="right:214px;top:390px">53.7</div>
<div class="t r" style="right:151px;top:390px">0.05</div>
<div class="rg" style="top:402px;height:14px"></div>
<div class="t r" style="right:672px;top:404px">23</div>
<div class="t r" style="right:630px;top:404px">255</div>
<div class="t r" style="right:588px;top:404px">255</div>
<div class="t r" style="right:546px;top:404px">0</div>
<div class="t r" style="right:484px;top:404px">97.1</div>
<div class="t r" style="right:432px;top:404px">-14.9</div>
<div class="t r" style="right:380px;top:404px">98.8</div>
<div class="t r" style="right:318px;top:404px">97.2</div>
<div class="t r" style="right:266px;top:404px">-15.2</div>
<div class="t r" style="right:214px;top:404px">99.0</div>
<div class="t r" style="right:151px;top:404px">0.29</div>
<div class="grad">
<div class="shd" style="top:35px;width:9px"></div>
<div class="bar" style="top:33px;width:6px;background:rgb(224, 224, 224)"></div>
<div class="shd" style="top:49px;width:8px"></div>
<div class="bar" style="top:47px;width:5px;background:rgb(192, 192, 192)"></div>
<div class="shd" style="top:63px;width:13px"></div>
<div class="bar" style="top:61px;width:10px;background:rgb(160, 160, 160)"></div>
<div class="shd" style="top:78px;width:15px"></div>
<div class="bar" style="top:76px;width:12px;background:rgb(128, 128, 128)"></div>
<div class="shd" style="top:92px;width:8px"></div>
<div class="bar" style="top:90px;width:5px;background:rgb(96, 96, 96)"></div>
<div class="shd" style="top:106px;width:15px"></div>
<div class="bar" style="top:104px;width:12px;background:rgb(64, 64, 64)"></div>
<div class="shd" style="top:120px;width:9px"></div>
<div class="bar" style="top:118px;width:6px;background:rgb(32, 32, 32)"></div>
<div class="shd" style="top:134px;width:6px"></div>
<div class="bar" style="top:132px;width:3px;background:rgb(0, 0, 0)"></div>
<div class="shd" style="top:148px;width:8px"></div>
<div class="bar" style="top:146px;width:5px;background:rgb(128, 0, 0)"></div>
<div class="shd" style="top:163px;width:9px"></div>
<div class="bar" style="top:161px;width:6px;background:rgb(255, 0, 0)"></div>
<div class="shd" style="top:177px;width:5px"></div>
<div class="bar" style="top:175px;width:2px;background:rgb(255, 128, 128)"></div>
<div class="shd" style="top:191px;width:16px"></div>
<div class="bar" style="top:189px;width:13px;background:rgb(0, 110, 0)"></div>
<div class="shd" style="top:205px;width:10px"></div>
<div class="bar" style="top:203px;width:7px;background:rgb(0, 255, 0)"></div>
<div class="shd" style="top:219px;width:14px"></div>
<div class="bar" style="top:217px;width:11px;background:rgb(20, 240, 130)"></div>
<div class="shd" style="top:233px;width:11px"></div>
<div class="bar" style="top:231px;width:8px;background:rgb(0, 24, 128)"></div>
<div class="shd" style="top:248px;width:9px"></div>
<div class="bar" style="top:246px;width:6px;background:rgb(10, 60, 255)"></div>
<div class="shd" style="top:262px;width:12px"></div>
<div class="bar" style="top:260px;width:9px;background:rgb(110, 128, 255)"></div>
<div class="shd" style="top:276px;width:8px"></div>
<div class="bar" style="top:274px;width:5px;background:rgb(0, 118, 118)"></div>
<div class="shd" style="top:290px;width:18px"></div>
<div class="bar" style="top:288px;width:15px;background:rgb(0, 255, 255)"></div>
<div class="shd" style="top:304px;width:9px"></div>
<div class="bar" style="top:302px;width:6px;background:rgb(128, 0, 128)"></div>
<div class="shd" style="top:318px;width:9px"></div>
<div class="bar" style="top:316px;width:6px;background:rgb(255, 0, 255)"></div>
<div class="shd" style="top:333px;width:4px"></div>
<div class="bar" style="top:331px;width:1px;background:rgb(128, 128, 0)"></div>
<div class="shd" style="top:347px;width:10px"></div>
<div class="bar" style="top:345px;width:7px;background:rgb(255, 255, 0)"></div>
</div>
<div class="panel"></div>
<div class="t" style="left:21px;top:437px">Profil:</div>
<div class="t" style="left:56px;top:437px;letter-spacing:-0.18px">CG241W_5200K(0.3398_0.3480)_L_120_030_LUT16bit.icm</div>
<div class="t c" style="left:194px;top:458px">Sollwert</div>
<div class="t c" style="left:287px;top:458px">Messwert</div>
<div class="bul" style="left:63px;top:484px"></div>
<div class="t" style="left:70px;top:480px">Wei&szlig;punkt:</div>
<div class="bul" style="left:63px;top:504px"></div>
<div class="t" style="left:70px;top:500px">Tonwertkurve:</div>
<div class="bul" style="left:63px;top:524px"></div>
<div class="t" style="left:70px;top:520px">Leuchtdichte:</div>
<div class="t c" style="left:195px;top:480px;letter-spacing:0.15px">x 0.3398, y 0.3480</div>
<div class="t c" style="left:288px;top:480px;letter-spacing:0.15px"><svg class="dl" width="6" height="8" viewBox="0 0 6 8"><path d="M2 0h2v2H2zM1 2h1v4H1zM4 2h1v4H4zM0 6h1v1H0zM5 6h1v1H5zM0 7h6v1H0z"/></svg>a 0.3, <svg class="dl" width="6" height="8" viewBox="0 0 6 8"><path d="M2 0h2v2H2zM1 2h1v4H1zM4 2h1v4H4zM0 6h1v1H0zM5 6h1v1H5zM0 7h6v1H0z"/></svg>b -0.1</div>
<div class="t c" style="left:194px;top:500px">L*</div>
<div class="t c" style="left:287px;top:500px">-</div>
<div class="t" style="left:71px;top:540px;letter-spacing:-0.2px">Wei&szlig;:</div>
<div class="t c" style="left:194px;top:540px">120 cd/m&sup2;</div>
<div class="t c" style="left:287px;top:540px">120 cd/m&sup2;</div>
<div class="t" style="left:71px;top:560px;letter-spacing:-0.2px">Schwarz:</div>
<div class="t c" style="left:194px;top:560px">0.30 cd/m&sup2;</div>
<div class="t c" style="left:287px;top:560px">0.27 cd/m&sup2;</div>
<div class="t" style="left:71px;top:580px;letter-spacing:-0.2px">Kontrast:</div>
<div class="t c" style="left:194px;top:580px">-</div>
<div class="t c" style="left:287px;top:580px">443 : 1</div>
<div class="vsep"></div>
<div class="t" style="left:466px;top:459px"><svg class="dl" width="6" height="8" viewBox="0 0 6 8"><path d="M2 0h2v2H2zM1 2h1v4H1zM4 2h1v4H4zM0 6h1v1H0zM5 6h1v1H5zM0 7h6v1H0z"/></svg>E<span class="sub">ab</span></div>
<div class="bul" style="left:344px;top:484px"></div>
<div class="t" style="left:351px;top:480px">Durchschnitt:</div>
<div class="t" style="left:466px;top:480px">0.28</div>
<div class="bul" style="left:344px;top:504px"></div>
<div class="t" style="left:351px;top:500px">Maximum:</div>
<div class="t" style="left:466px;top:500px">0.62</div>
<div class="bul" style="left:344px;top:524px"></div>
<div class="t" style="left:351px;top:520px">Standardabweichung:</div>
<div class="t" style="left:466px;top:520px">0.15</div>
<div class="ok"><div class="t c" style="left:40px;top:7px">OK</div></div>
<div class="wbot"></div>
<div style="position:absolute;left:712px;top:0;width:1px;height:648px;background:#7a7a7a"></div>
</div>
</body></html>
